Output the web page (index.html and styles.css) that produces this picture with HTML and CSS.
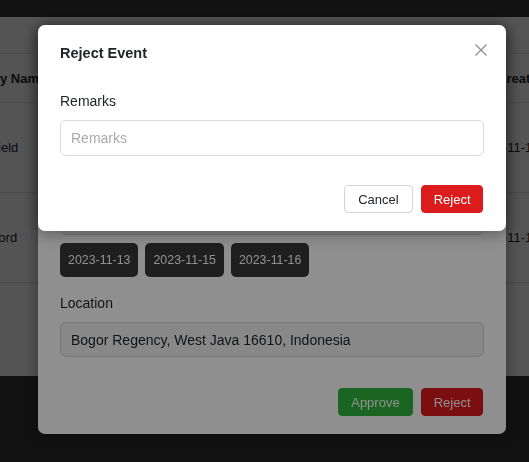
FILE: index.html
```html
<!DOCTYPE html>
<html lang="en">
<head>
<meta charset="utf-8">
<title>Reject Event</title>
<link rel="stylesheet" href="styles.css">
</head>
<body>
<div class="page">
  <header class="topbar"></header>
  <main class="content">
    <div class="table">
      <div class="tr th">
        <div class="td">Company Name</div>
        <div class="td">Event Name</div>
        <div class="td created">Created At</div>
      </div>
      <div class="tr">
        <div class="td link">PT Sheffield</div>
        <div class="td">Annual Gathering</div>
        <div class="td">2023-11-10</div>
      </div>
      <div class="tr">
        <div class="td">PT Stanford</div>
        <div class="td">Product Launch</div>
        <div class="td">2023-11-12</div>
      </div>
    </div>
  </main>
</div>

<div class="backdrop backdrop-first"></div>
<div class="modal-layer">
  <div class="modal">
    <div class="modal-header">
      <h2 class="modal-title">Event Details</h2>
      <span class="close" aria-label="Close"><svg width="12" height="12" viewBox="0 0 12 12"><path d="M0.5 0.5L11.5 11.5M11.5 0.5L0.5 11.5" stroke="#8c8c8c" stroke-width="1.2" fill="none"/></svg></span>
    </div>
    <div class="modal-body">
      <div class="field">
        <label class="label">Event Name</label>
        <input class="control readonly" value="Community Gathering" readonly>
      </div>
      <div class="field">
        <label class="label">Event Dates</label>
        <input class="control readonly short" value="3 dates selected" readonly>
      </div>
      <div class="chips">
        <span class="chip">2023-11-13</span>
        <span class="chip">2023-11-15</span>
        <span class="chip">2023-11-16</span>
      </div>
      <div class="field loc">
        <label class="label">Location</label>
        <input class="control readonly short" value="Bogor Regency, West Java 16610, Indonesia" readonly>
      </div>
    </div>
    <div class="modal-footer back-footer">
      <button class="btn btn-approve">Approve</button>
      <button class="btn btn-reject">Reject</button>
    </div>
  </div>
</div>

<div class="backdrop backdrop-second"></div>
<div class="modal-layer">
  <div class="modal">
    <div class="modal-header">
      <h2 class="modal-title">Reject Event</h2>
      <span class="close" aria-label="Close"><svg width="12" height="12" viewBox="0 0 12 12"><path d="M0.5 0.5L11.5 11.5M11.5 0.5L0.5 11.5" stroke="#8c8c8c" stroke-width="1.2" fill="none"/></svg></span>
    </div>
    <div class="modal-body">
      <div class="field">
        <label class="label">Remarks</label>
        <input class="control" placeholder="Remarks">
      </div>
    </div>
    <div class="modal-footer">
      <button class="btn btn-cancel">Cancel</button>
      <button class="btn btn-reject">Reject</button>
    </div>
  </div>
</div>
</body>
</html>
```

FILE: styles.css
```css
* { box-sizing: border-box; }

html, body {
  margin: 0;
  height: 100%;
}

body {
  background: #333333;
  font-family: "Liberation Sans", Arial, sans-serif;
  color: #212529;
  overflow: hidden;
}

.topbar {
  height: 17px;
  background: #333333;
}

.content {
  height: 359px;
  background: #f8f8f8;
  padding-top: 36px;
  overflow: hidden;
}

.table {
  margin-left: -60px;
  width: 800px;
  border-top: 1px solid #dcdcdc;
  font-size: 13px;
}

.tr {
  display: grid;
  grid-template-columns: 250px 276px 200px;
  align-items: center;
  height: 90px;
  border-bottom: 1px solid #dcdcdc;
}

.tr.th {
  height: 49px;
  font-weight: bold;
}

.td {
  padding: 0 8px;
  white-space: nowrap;
}

.created { text-indent: 23px; }

.link { color: #1f2340; }

.backdrop {
  position: fixed;
  inset: 0;
}

.backdrop-first { background: rgba(0, 0, 0, 0.4); }
.backdrop-second { background: rgba(0, 0, 0, 0.44); }

.modal-layer {
  position: fixed;
  inset: 0;
  display: flex;
  align-items: flex-start;
  padding: 25px 0 0 38px;
}

.modal {
  width: 468px;
  background: #ffffff;
  border-radius: 7px;
  padding: 18px 22px 18px;
  box-shadow: 0 2px 16px rgba(0, 0, 0, 0.4);
}

.modal-header {
  display: flex;
  justify-content: space-between;
  align-items: flex-start;
  height: 20px;
}

.modal-title {
  margin: 0;
  font-size: 14.5px;
  line-height: 20px;
  font-weight: bold;
  color: #212529;
}

.close {
  display: flex;
  margin: 1px -3px 0 0;
}

.modal-body {
  padding-top: 28px;
}

.field + .field { margin-top: 15px; }

.label {
  display: block;
  font-size: 14px;
  line-height: 20px;
  margin-bottom: 9px;
  color: #212529;
}

.control {
  display: block;
  width: 100%;
  height: 36px;
  padding: 0 10px;
  border: 1px solid #d9d9d9;
  border-radius: 6px;
  font: 14px "Liberation Sans", Arial, sans-serif;
  color: #212529;
  background: #ffffff;
  outline: none;
}

.control::placeholder { color: #aaaaaa; }

.control.readonly {
  background: #f3f3f3;
  border-color: #d4d4d4;
}

.control.short { height: 35px; }

.chips {
  display: flex;
  gap: 7px;
  margin-top: 8px;
}

.chip {
  display: flex;
  align-items: center;
  height: 34px;
  padding: 0 8px;
  border-radius: 5px;
  background: #383838;
  color: #ffffff;
  font-size: 12.4px;
}

.field.loc { margin-top: 16px; }

.modal-footer {
  display: flex;
  justify-content: flex-end;
  gap: 8px;
  margin-top: 29px;
  margin-right: 1px;
}

.back-footer { margin-top: 31px; }

.btn {
  height: 28px;
  padding: 0 11.5px;
  border-radius: 4px;
  border: 1px solid transparent;
  font: 13px "Liberation Sans", Arial, sans-serif;
  cursor: pointer;
}

.btn-approve { padding: 0 12.5px; }

.btn-cancel {
  background: #ffffff;
  border-color: #d4d4d4;
  color: #212529;
  padding: 0 13.5px;
}

.btn-reject {
  background: #dc1c1c;
  border-color: #dc1c1c;
  color: #ffffff;
}

.btn-approve {
  background: #2db53c;
  border-color: #2db53c;
  color: #ffffff;
}
```
